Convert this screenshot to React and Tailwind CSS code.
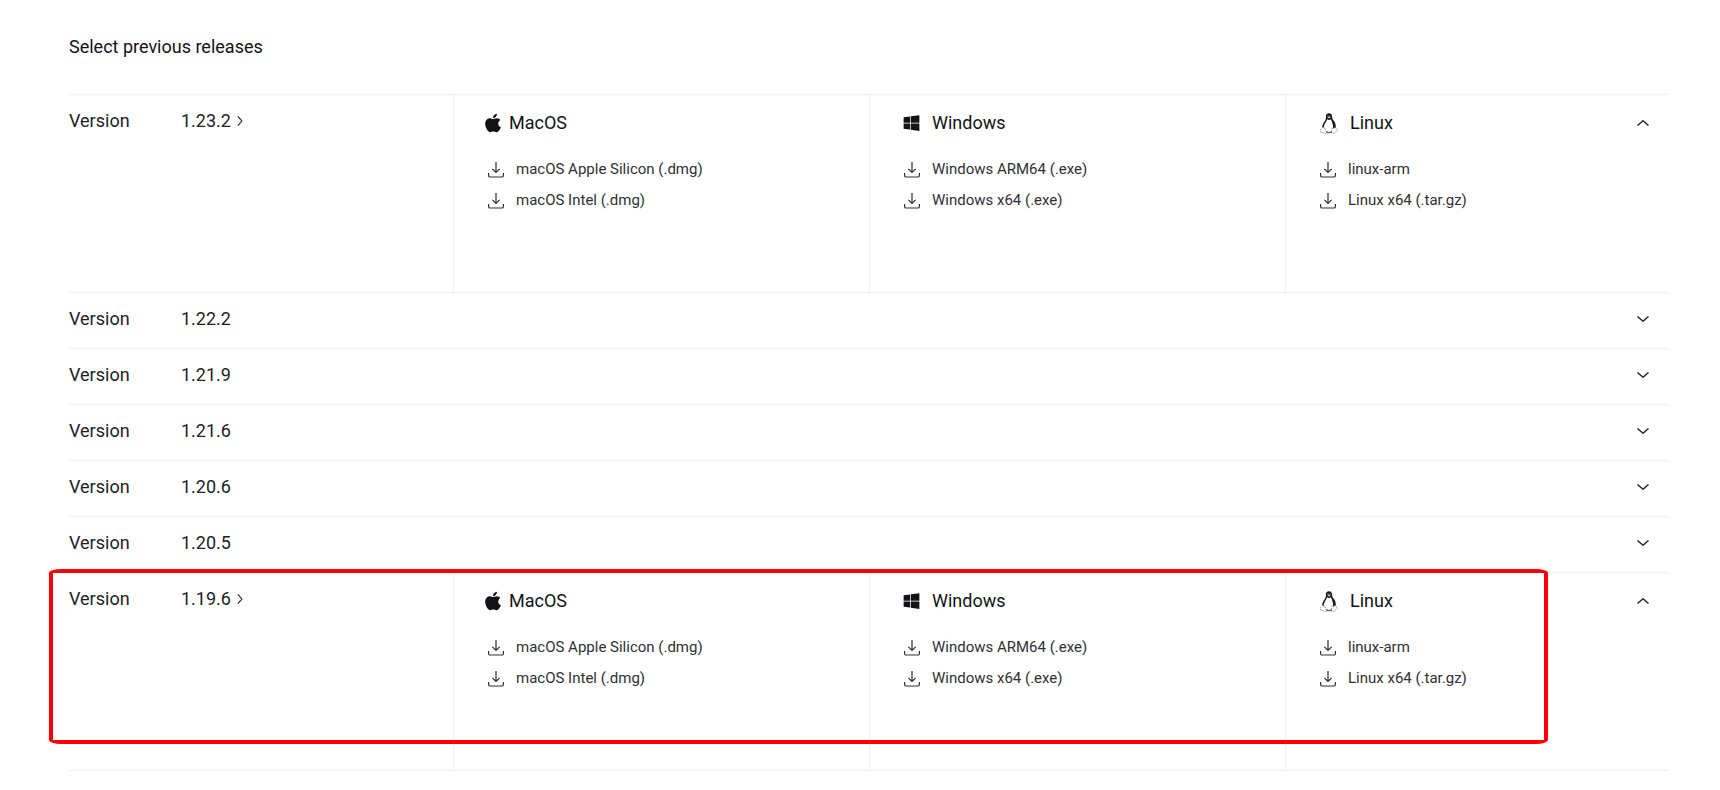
import React, { useState } from "react";
import { FaApple, FaWindows } from "react-icons/fa";

const platforms = [
  {
    name: "MacOS",
    icon: "apple",
    files: ["macOS Apple Silicon (.dmg)", "macOS Intel (.dmg)"],
  },
  {
    name: "Windows",
    icon: "windows",
    files: ["Windows ARM64 (.exe)", "Windows x64 (.exe)"],
  },
  {
    name: "Linux",
    icon: "linux",
    files: ["linux-arm", "Linux x64 (.tar.gz)"],
  },
];

const releases = [
  { version: "1.23.2", open: true },
  { version: "1.22.2" },
  { version: "1.21.9" },
  { version: "1.21.6" },
  { version: "1.20.6" },
  { version: "1.20.5" },
  { version: "1.19.6", open: true, highlighted: true },
];

function Chevron({ className }) {
  return (
    <svg viewBox="0 0 12 6" fill="none" stroke="currentColor" className={className}>
      <path d="M0.5 0.4 L6 5.3 L11.5 0.4" strokeWidth="1.3" />
    </svg>
  );
}

function DownloadIcon() {
  return (
    <svg
      viewBox="0 0 16 16"
      fill="none"
      stroke="currentColor"
      strokeWidth="1.2"
      className="h-4 w-4 shrink-0"
    >
      <path d="M8 0v10.3M4.4 6.8L8 10.4l3.6-3.6" />
      <path d="M0.6 11v2.4c0 1 .6 1.6 1.6 1.6h11.6c1 0 1.6-.6 1.6-1.6V11" />
    </svg>
  );
}

function Penguin() {
  return (
    <svg viewBox="0 0 18 21" className="h-[21px] w-[18px]">
      <path
        d="M9 .3C6.800.3 5.800 1.800 5.900 3.700c.1 1.900-.1 2.700-1 4-1.400 1.900-2.600 3.800-2.700 6.300l2 5.300h8.800l2.700-4.800c.4-2.800-.6-5-2-6.700-1.200-1.500-1.600-2.400-1.600-4C12.100 1.500 11.200.3 9 .3z"
        fill="#18191d"
      />
      <path
        d="M7.200 6.300c-.5 1.700-2.800 4.300-3.300 7.200-.2 2 1.400 2.600 2.100 4.800.8.8 4.800.8 5.700 0 .5-1.300.6-2.500 1.300-3.300.6-2.100-.9-6.200-2.200-8.700-.8.8-2.500 1-3.600 0z"
        fill="#fff"
      />
      <path d="M7.200 4.300l1.700-.7 1.800.7-1.500 1.200z" fill="#c9c9c9" />
      <path
        d="M3 14.300c-.7 1.100-1.700 1.300-2.300 2 .1 1.200-.3 2-.3 2.600 1.400.8 3.800.8 4.800 1.500.9.200 1.600-.6 1.400-1.500-.9-1.700-1.700-4.300-3.600-4.600z"
        fill="#fff"
        stroke="#777"
        strokeWidth=".7"
        strokeDasharray="1.5 .6"
      />
      <path
        d="M12.200 14.700c-.2 1.900-.8 3.500-.4 5.100 1 .9 2 .6 2.800-.2 1-.8 2-1 2.900-1.800-.1-.8-.9-1-.9-2.200-.7-.2-.9-.7-1.700-1-.8.9-1.800.9-2.700.1z"
        fill="#fff"
        stroke="#777"
        strokeWidth=".7"
        strokeDasharray="1.5 .6"
      />
      <path d="M6.400 19.700h5.300" stroke="#333" strokeWidth=".8" />
      <circle cx="8" cy="3" r=".6" fill="#bbb" />
      <circle cx="10" cy="3" r=".6" fill="#bbb" />
    </svg>
  );
}

function PlatformIcon({ icon }) {
  if (icon === "apple") return <FaApple className="h-[22px] w-4" />;
  if (icon === "windows") return <FaWindows className="h-[18px] w-[17px]" />;
  return <Penguin />;
}

const headingStyles = {
  apple: "gap-2 pl-[31px]",
  windows: "gap-3 pl-[33px]",
  linux: "gap-3 pl-[34px]",
};

function Platform({ platform }) {
  return (
    <div className="min-w-0 border-l border-[#efeff0] pt-4">
      <h2
        className={`flex h-6 items-center text-lg text-[#121317] ${headingStyles[platform.icon]}`}
      >
        <PlatformIcon icon={platform.icon} />
        {platform.name}
      </h2>
      <ul className="mt-[19px] pl-[34px]">
        {platform.files.map((file) => (
          <li key={file}>
            <a
              href="#download"
              className="flex h-[31px] items-center gap-3 text-[15px] text-[#2f3034]"
            >
              <DownloadIcon />
              {file}
            </a>
          </li>
        ))}
      </ul>
    </div>
  );
}

function Release({ release }) {
  const [open, setOpen] = useState(Boolean(release.open));

  return (
    <li
      className={`relative border-b border-[#efeff0] ${open ? "min-h-[198px]" : "min-h-14"}`}
    >
      <div
        className={`grid grid-cols-[24fr_26fr_26fr_24fr] ${open ? "min-h-[197px]" : ""}`}
      >
        <div className="flex items-start pt-3.5 text-lg leading-6 text-[#212226]">
          <span className="w-28">Version</span>
          {open ? (
            <a href="#release" className="flex items-center gap-1">
              {release.version}
              <Chevron className="h-[6px] w-[10px] -rotate-90" />
            </a>
          ) : (
            <span>{release.version}</span>
          )}
        </div>
        {open &&
          platforms.map((platform) => (
            <Platform key={platform.name} platform={platform} />
          ))}
      </div>
      <button
        type="button"
        aria-label={`Toggle version ${release.version}`}
        aria-expanded={open}
        onClick={() => setOpen(!open)}
        className={`absolute right-4 flex h-5 w-5 items-center justify-center text-[#212226] ${open ? "top-[18px]" : "top-4"}`}
      >
        <Chevron className={open ? "h-[6px] w-3 rotate-180" : "h-[6px] w-3"} />
      </button>
      {release.highlighted && (
        <div className="pointer-events-none absolute -top-1 right-[121px] -left-5 h-[175px] rounded-[12px/4px] border-4 border-[#ff0000]" />
      )}
    </li>
  );
}

export default function App() {
  return (
    <main className="min-h-screen bg-white pt-[35px] pr-[51px] pb-5 pl-[69px] font-['Roboto',sans-serif]">
      <h1 className="text-lg leading-6 text-[#121317]">Select previous releases</h1>
      <ul className="mt-[35px] border-t border-[#efeff0]">
        {releases.map((release) => (
          <Release key={release.version} release={release} />
        ))}
      </ul>
    </main>
  );
}
